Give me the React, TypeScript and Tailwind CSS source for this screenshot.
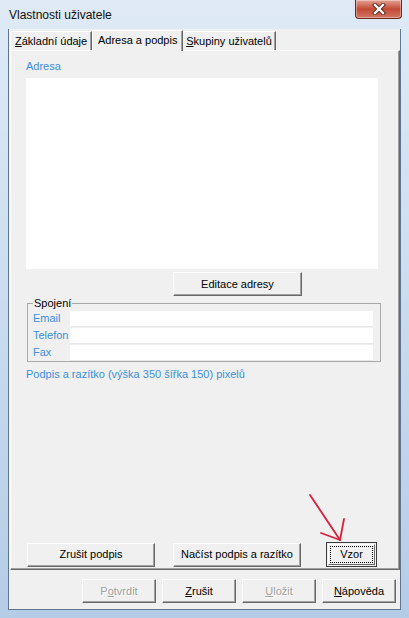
import React from 'react';

const ui = "font-['Liberation_Sans',Arial,sans-serif] text-[11px] leading-[13px] text-black";

function Btn({
  children,
  w,
  disabled,
  focused,
}: {
  children: React.ReactNode;
  w: string;
  disabled?: boolean;
  focused?: boolean;
}) {
  if (focused) {
    return (
      <div className={`${w} h-[25px] border border-[#3c3c3c] bg-[#f0f0f0] p-[1px]`}>
        <div className="h-full border-t border-l border-t-white border-l-white border-b border-r border-b-[#696969] border-r-[#696969] p-[1px]">
          <div className="h-full flex items-center justify-center border border-dotted border-black">{children}</div>
        </div>
      </div>
    );
  }
  return (
    <div
      className={`${w} h-[24px] flex items-center justify-center bg-[#f0f0f0] border-t border-l border-t-white border-l-white border-b border-r border-b-[#696969] border-r-[#696969] shadow-[inset_-1px_-1px_0_#a0a0a0] ${
        disabled ? 'text-[#a0a0a0] [text-shadow:1px_1px_0_#ffffff]' : ''
      }`}
    >
      {children}
    </div>
  );
}

function Field({ label }: { label: string }) {
  return (
    <div className="flex items-center h-[17px]">
      <span className="w-[42px] pl-[5px] text-[#3b8fdc]">{label}</span>
      <div className="flex-1 mr-[7px] h-[16px] bg-white border-b border-[#e8e8e8]" />
    </div>
  );
}

export default function App() {
  return (
    <div className={`${ui} w-[409px] h-[618px] flex flex-col relative bg-gradient-to-b from-[#dfeaf6] via-[#c9dcef] to-[#b4cce6] overflow-hidden`}>
      {/* title bar */}
      <div className="h-[29px] flex justify-between pl-[9px] pr-[7px]">
        <span className="mt-[8px] font-['Liberation_Sans',Arial,sans-serif] text-[12px] leading-[14px] text-[#111]">
          Vlastnosti uživatele
        </span>
        <div className="w-[47px] h-[19px] rounded-b-[4px] border border-t-0 border-[#6b2a20] bg-gradient-to-b from-[#e3a293] via-[#c24a36] to-[#d37563] flex items-center justify-center shadow-[inset_0_0_0_1px_rgba(255,255,255,0.35)]">
          <svg width="14" height="12" viewBox="0 0 14 12">
            <path d="M3 2 L11 10 M11 2 L3 10" stroke="#5a2018" strokeWidth="4.2" strokeLinecap="square" />
            <path d="M3 2 L11 10 M11 2 L3 10" stroke="#ffffff" strokeWidth="2.4" strokeLinecap="square" />
          </svg>
        </div>
      </div>

      {/* client area */}
      <div className="mx-[8px] mb-[8px] flex-1 flex flex-col bg-[#f0f0f0] border border-t-0 border-[#5f7590]">
        {/* tabs */}
        <div className="h-[21px] flex items-end pl-[1px]">
          <div className="h-[19px] px-[4px] flex items-center border-t border-l border-white border-r border-r-[#696969] shadow-[inset_-1px_0_0_#a0a0a0]">
            <span>
              <u>Z</u>ákladní údaje
            </span>
          </div>
          <div className="h-[21px] w-[91px] -mb-[1px] z-10 bg-[#f0f0f0] flex items-start pt-[3px] justify-center border-t border-l border-white border-r border-r-[#696969] shadow-[inset_-1px_0_0_#a0a0a0]">
            Adresa a podpis
          </div>
          <div className="h-[19px] px-[3px] flex items-center border-t border-white border-r border-r-[#696969] shadow-[inset_-1px_0_0_#a0a0a0]">
            <span>
              <u>S</u>kupiny uživatelů
            </span>
          </div>
        </div>

        {/* tab panel */}
        <div className="h-[520px] ml-[1px] mr-0 flex flex-col border-t border-l border-white border-r border-b border-r-[#696969] border-b-[#696969] shadow-[inset_-1px_-1px_0_#a0a0a0] pl-[15px] pt-[9px]">
          <div className="h-[13px] text-[#3b8fdc]">Adresa</div>
          <div className="mt-[5px] w-[352px] h-[191px] bg-white" />
          <div className="mt-[3px] ml-[147px]">
            <Btn w="w-[129px]">Editace adresy</Btn>
          </div>

          <div className="relative mt-[7px] ml-[1px] w-[354px] h-[59px] border border-[#a8a8a8] pt-[6px]">
            <span className="absolute -top-[7px] left-[5px] bg-[#f0f0f0] px-[1px]">Spojení</span>
            <Field label="Email" />
            <Field label="Telefon" />
            <Field label="Fax" />
          </div>

          <div className="mt-[6px] text-[#3b8fdc]">Podpis a razítko (výška 350 šířka 150) pixelů</div>

          <div className="mt-auto mb-[2px] flex items-center">
            <div className="ml-[1px]">
              <Btn w="w-[128px]">Zrušit podpis</Btn>
            </div>
            <div className="ml-[18px]">
              <Btn w="w-[128px]">Načíst podpis a razítko</Btn>
            </div>
            <div className="ml-[25px]">
              <Btn w="w-[51px]" focused>
                Vzor
              </Btn>
            </div>
          </div>
        </div>

        {/* footer */}
        <div className="flex-1 flex justify-end gap-[6px] pr-[4px] pt-[9px]">
          <Btn w="w-[74px]" disabled>
            <span>
              P<u>o</u>tvrdit
            </span>
          </Btn>
          <Btn w="w-[74px]">
            <span>
              <u>Z</u>rušit
            </span>
          </Btn>
          <Btn w="w-[74px]" disabled>
            <span>
              <u>U</u>ložit
            </span>
          </Btn>
          <Btn w="w-[74px]">
            <span>
              <u>N</u>ápověda
            </span>
          </Btn>
        </div>
      </div>

      {/* red annotation arrow */}
      <svg className="absolute left-0 top-0 pointer-events-none" width="409" height="618">
        <g stroke="#d8213b" strokeWidth="1.8" strokeLinecap="round" fill="none">
          <path d="M310 495 L340 540" />
          <path d="M340 540 L321 533" />
          <path d="M340 540 L344 519" />
        </g>
      </svg>
    </div>
  );
}
